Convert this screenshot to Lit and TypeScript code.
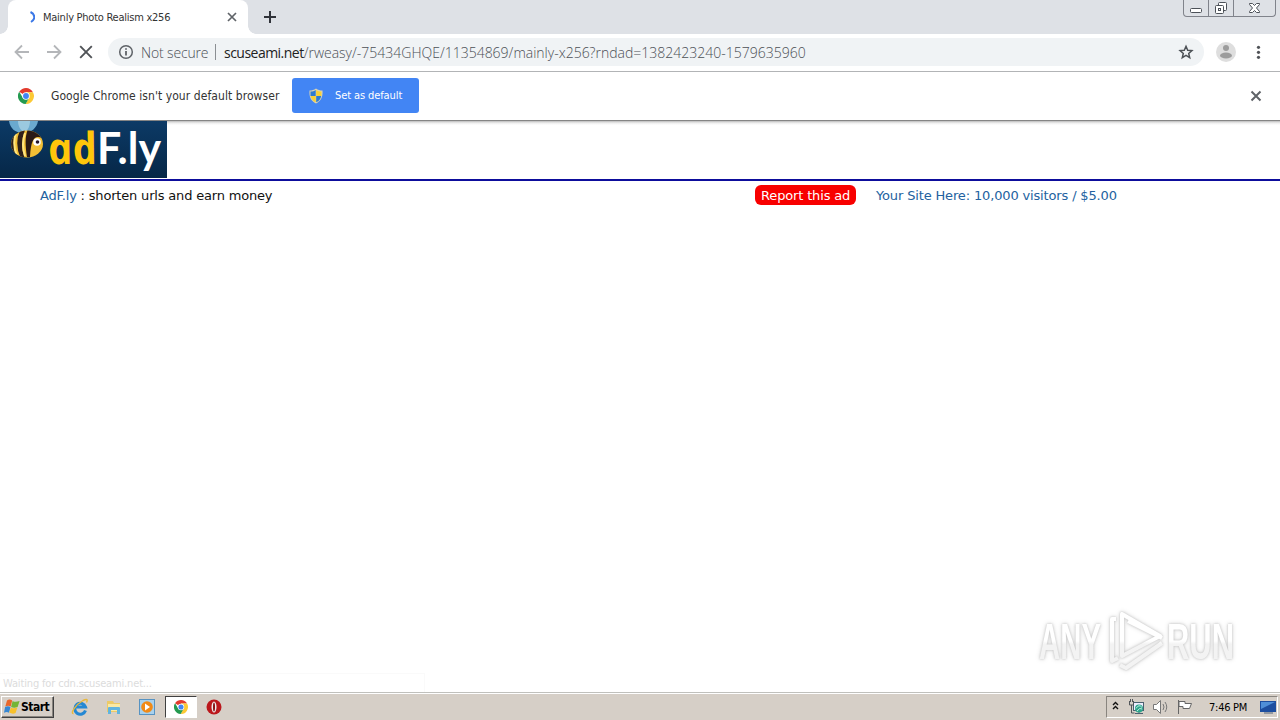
import { LitElement, css, html, svg } from "lit";
import { customElement, property } from "lit/decorators.js";

const chromeLogo = svg`
  <circle cx="12" cy="12" r="12" fill="#fff" />
  <path d="M12 12 1.800 5.600A12 12 0 0 1 22.400 6.200H12Z" fill="#e33b2e" />
  <path d="M12 12 12 6.200H22.400A12 12 0 0 1 11.500 24l5-9.300Z" fill="#fcc934" />
  <path d="M12 12 16.500 15 11.500 24A12 12 0 0 1 1.800 5.600l5.400 9.100Z" fill="#249a50" />
  <circle cx="12" cy="12" r="5.600" fill="#fff" />
  <circle cx="12" cy="12" r="4.400" fill="#4285f4" />
`;

// Tab strip, toolbar and the default-browser bar.
@customElement("browser-chrome")
export class BrowserChrome extends LitElement {
  @property() tabTitle = "";
  @property() host = "";
  @property() path = "";

  static styles = css`
    :host {
      display: block;
      flex: none;
      font-family: "DejaVu Sans Condensed", "DejaVu Sans", sans-serif;
      font-stretch: condensed;
      color: #333;
      background: #fff;
    }
    svg {
      display: block;
      flex: none;
    }
    .strip {
      display: flex;
      height: 34px;
      background: #dee1e6;
    }
    .lead {
      width: 8px;
      height: 8px;
      align-self: flex-end;
      background: radial-gradient(circle at 0 0, transparent 7.5px, #fff 8px);
    }
    .tab {
      box-sizing: border-box;
      display: flex;
      align-items: center;
      width: 240px;
      padding: 0 10px 0 19px;
      background: #fff;
      border-radius: 8px 8px 0 0;
      font-size: 11px;
    }
    .foot {
      width: 8px;
      height: 8px;
      align-self: flex-end;
      background: radial-gradient(circle at 100% 0, transparent 7.5px, #fff 8px);
    }
    .title {
      flex: 1;
      margin-left: 8px;
      letter-spacing: -0.25px;
      white-space: nowrap;
    }
    .plus {
      margin: 11px 0 0 8px;
    }
    .controls {
      box-sizing: border-box;
      display: flex;
      width: 93px;
      height: 17px;
      margin: 0 4px 0 auto;
      border: 1px solid #80838b;
      border-top: 0;
      border-radius: 0 0 4px 4px;
    }
    .toolbar {
      box-sizing: border-box;
      display: flex;
      align-items: center;
      height: 38px;
      padding: 0 14px 1px;
      border-bottom: 1px solid #b2b4b6;
    }
    .toolbar > svg + svg {
      margin-left: 16px;
    }
    .toolbar > svg:last-child {
      margin-left: 14px;
    }
    .omnibox {
      box-sizing: border-box;
      display: flex;
      align-items: center;
      flex: 1;
      height: 28px;
      margin: 0 12px 0 14px;
      padding: 0 10px;
      border-radius: 14px;
      background: #f0f3f5;
      font: 300 14px "Open Sans", "Noto Sans", sans-serif;
      color: #4c5055;
      white-space: nowrap;
    }
    .secure {
      width: 67px;
      margin-left: 7px;
      letter-spacing: -0.15px;
    }
    .bar {
      width: 1px;
      height: 16px;
      margin: 0 8px 0 7px;
      background: #8b8f93;
    }
    .url {
      flex: 1;
    }
    .url b {
      font-weight: 400;
      letter-spacing: -0.52px;
      color: #222;
    }
    .infobar {
      box-sizing: border-box;
      display: flex;
      align-items: center;
      height: 49px;
      padding: 0 18px 1px;
      border-bottom: 1px solid #858585;
      font-size: 12px;
    }
    .message {
      width: 228px;
      margin: 0 13px 0 17px;
      white-space: nowrap;
      letter-spacing: 0.07px;
    }
    .default {
      box-sizing: border-box;
      display: flex;
      align-items: center;
      width: 127px;
      height: 35px;
      margin: 0 auto 0 0;
      padding: 0 0 0 16px;
      border: 0;
      border-radius: 3px;
      background: #4285f4;
      color: #fff;
      font: 11px "DejaVu Sans Condensed", "DejaVu Sans", sans-serif;
      letter-spacing: -0.1px;
      white-space: nowrap;
    }
    .default svg {
      margin-right: 11px;
    }
  `;

  render() {
    return html`
      <div class="strip">
        <div class="lead"></div>
        <div class="tab">
          <svg width="8" height="14" viewBox="0 0 8 14" fill="none" stroke="#3b78e7" stroke-width="2">
            <path d="M3.500 2C8.500 4.500 8.500 9.500 4 12" />
          </svg>
          <span class="title">${this.tabTitle}</span>
          <svg width="12" height="12" viewBox="0 0 12 12" stroke="#5f6368" stroke-width="1.700">
            <path d="m2 2 8 8M10 2l-8 8" />
          </svg>
        </div>
        <div class="foot"></div>
        <svg class="plus" width="12" height="12" viewBox="0 0 12 12" stroke="#30333a" stroke-width="2">
          <path d="M6 0v12M0 6h12" />
        </svg>
        <div class="controls">
          <svg width="91" height="16" viewBox="0 0 91 16" fill="none" stroke="#4c5158">
            <path d="M24.500 0v16M49.500 0v16" stroke="#80838b" />
            <rect x="6.500" y="8.500" width="11" height="4" rx="1" fill="#fff" />
            <rect x="34.500" y="2.500" width="8" height="8" rx="1" fill="#fff" />
            <rect x="31.500" y="5.500" width="8" height="8" rx="1" fill="#fff" />
            <rect x="34.500" y="8.500" width="2" height="2" />
            <path
              d="M65.500 3.500h3l2 2 2-2h3v1l-3 3.500 3 3.500v1h-3l-2-2-2 2h-3v-1l3-3.500-3-3.500Z"
              fill="#fff"
            />
          </svg>
        </div>
      </div>
      <div class="toolbar">
        <svg width="16" height="16" viewBox="0 0 16 16" fill="none" stroke="#b4b6b9" stroke-width="1.800">
          <path d="M15 8H2M8 1.500 1.500 8 8 14.500" />
        </svg>
        <svg width="16" height="16" viewBox="0 0 16 16" fill="none" stroke="#b4b6b9" stroke-width="1.800">
          <path d="M1 8h13M8 1.500 14.500 8 8 14.500" />
        </svg>
        <svg width="16" height="16" viewBox="0 0 16 16" fill="none" stroke="#505357" stroke-width="1.900">
          <path d="m2.200 2.200 11.600 11.600M13.800 2.200 2.200 13.800" />
        </svg>
        <div class="omnibox">
          <svg width="16" height="16" viewBox="0 0 16 16" fill="none" stroke="#5f6368" stroke-width="1.500">
            <circle cx="8" cy="8" r="6.300" />
            <path d="M8 7v4.500M8 4.300v1.500" stroke-width="1.800" />
          </svg>
          <span class="secure">Not secure</span>
          <span class="bar"></span>
          <span class="url"><b>${this.host}</b>${this.path}</span>
          <svg width="16" height="16" viewBox="0 0 16 16" fill="none" stroke="#4d5156" stroke-width="1.500">
            <path d="m8 2.300 1.700 3.900 4.200.4-3.200 2.800 1 4.200L8 11.400l-3.700 2.200 1-4.200-3.200-2.800 4.200-.4Z" />
          </svg>
        </div>
        <svg width="20" height="20" viewBox="0 0 20 20">
          <circle cx="10" cy="10" r="10" fill="#dedede" />
          <circle cx="10" cy="6" r="3" fill="#9c9c9c" />
          <ellipse cx="10" cy="13.500" rx="6" ry="3" fill="#9c9c9c" />
        </svg>
        <svg width="16" height="16" viewBox="0 0 16 16" fill="#505357">
          <circle cx="8.500" cy="3.300" r="1.600" />
          <circle cx="8.500" cy="8.300" r="1.600" />
          <circle cx="8.500" cy="13.300" r="1.600" />
        </svg>
      </div>
      <div class="infobar">
        <svg width="16" height="16" viewBox="0 0 24 24">${chromeLogo}</svg>
        <span class="message">Google Chrome isn't your default browser</span>
        <button class="default">
          <svg width="16" height="16" viewBox="0 0 16 16">
            <path d="M8 .5C6 2 4 2.500 1.500 2.500 1 9 3 13 8 15.500 13 13 15 9 14.500 2.500 12 2.500 10 2 8 .5Z" fill="#d9d3b4" />
            <path d="M7.700 2v6H2.500V3.500C5 3.500 6 3 7.700 2ZM8.200 8h5c-.6 3-2 5-5 6.300Z" fill="#2d7bd0" />
            <path d="M8.200 2v6h5.200V3.500C11 3.500 10 3 8.200 2ZM7.700 8h-5c.6 3 2 5 5 6.300Z" fill="#f8d135" />
          </svg>
          Set as default
        </button>
        <svg width="12" height="12" viewBox="0 0 12 12" stroke="#5f6368" stroke-width="2">
          <path d="m1.500 1.500 9 9M10.500 1.500l-9 9" />
        </svg>
      </div>
    `;
  }
}

@customElement("ad-page")
export class AdPage extends LitElement {
  static styles = css`
    :host {
      display: block;
      position: relative;
      flex: 1;
      min-height: 0;
      overflow: hidden;
      background: #fff;
      font-family: "DejaVu Sans", sans-serif;
      font-size: 13px;
    }
    svg {
      display: block;
    }
    .banner {
      height: 58px;
      border-bottom: 2px solid #0d0d9c;
      background: linear-gradient(#bbb, #eee 2px, #fff 4px);
    }
    .row {
      display: flex;
      align-items: center;
      height: 28px;
      padding: 0 40px;
      white-space: nowrap;
    }
    .link {
      color: #2362a0;
    }
    .slogan {
      width: 715px;
      letter-spacing: -0.18px;
      color: #111;
    }
    .report {
      box-sizing: border-box;
      width: 101px;
      height: 20px;
      margin-right: 20px;
      padding-left: 6px;
      border-radius: 6px;
      background: #f80000;
      color: #fff;
      line-height: 21px;
      letter-spacing: -0.15px;
    }
    .site {
      letter-spacing: -0.15px;
    }
    .status {
      position: absolute;
      left: 0;
      bottom: 0;
      box-sizing: border-box;
      width: 425px;
      height: 19px;
      padding-left: 3px;
      border: solid #fafafa;
      border-width: 1px 1px 0 0;
      color: #dcdcdc;
      font: 11px/19px "DejaVu Sans Condensed", "DejaVu Sans", sans-serif;
      letter-spacing: -0.15px;
    }
    .watermark {
      position: absolute;
      right: 26px;
      bottom: 14px;
      filter: drop-shadow(0 0 1px #c4c4c4) drop-shadow(0 0 2px #ddd);
    }
    .mark {
      font: 700 50px "Liberation Sans", sans-serif;
    }
    .logo-a {
      font: italic 700 44px "Open Sans", sans-serif;
    }
    .logo-f {
      font: 700 44px Lato, sans-serif;
    }
  `;

  render() {
    return html`
      <div class="banner">
        <svg width="167" height="57" viewBox="0 0 167 57">
          <defs>
            <linearGradient id="sky" x2="0" y2="1">
              <stop stop-color="#0c3a66" />
              <stop offset="1" stop-color="#062747" />
            </linearGradient>
            <clipPath id="body"><ellipse cx="27" cy="23" rx="16" ry="13.500" /></clipPath>
          </defs>
          <rect width="167" height="57" fill="url(#sky)" />
          <path d="M9 0c1 7 6 12 14 12 8 0 14-5 15-12Z" fill="#6aa9cf" />
          <path d="M18 0c0 6 3 10 7 11 3-2 5-6 5-11Z" fill="#9bc9e0" />
          <g clip-path="url(#body)">
            <rect x="10" y="9" width="34" height="29" fill="#f3bf35" />
            <path d="M10 9h6q-5 12 2 28h-8ZM20 9q-6 14 1 29h4q-6-14 0-29Z" fill="#30201a" />
            <path d="M28 8c8-1 13 4 14 9-7-3-11 0-12 19h-3c-2-13-2-21 1-28Z" fill="#2b1a16" />
            <path d="M16 12q-4 11 1 23M25 12q-4 11 0 23" fill="none" stroke="#ffe681" stroke-width="2" />
          </g>
          <circle cx="37" cy="21" r="3.800" fill="#fff" />
          <circle cx="37.500" cy="21" r="1.800" fill="#24142a" />
          <g transform="translate(50.500 43) skewX(12)">
            <text class="logo-a" fill="#ffc60b" textLength="49" lengthAdjust="spacingAndGlyphs">ad</text>
          </g>
          <text class="logo-f" x="97" y="43" fill="#fff" textLength="64" lengthAdjust="spacingAndGlyphs">F.ly</text>
        </svg>
      </div>
      <div class="row">
        <span class="slogan"><span class="link">AdF.ly</span> : shorten urls and earn money</span>
        <span class="report">Report this ad</span>
        <span class="link site">Your Site Here: 10,000 visitors / $5.00</span>
      </div>
      <svg class="watermark" width="220" height="76" viewBox="0 0 220 76">
        <defs>
          <linearGradient id="shade" gradientUnits="userSpaceOnUse" x1="0" y1="8" x2="0" y2="70">
            <stop offset=".5" stop-color="#fff" />
            <stop offset=".55" stop-color="#f3f3f3" />
          </linearGradient>
        </defs>
        <g class="mark" fill="url(#shade)">
          <text x="5" y="57" textLength="62" lengthAdjust="spacingAndGlyphs">ANY</text>
          <text x="133" y="57" textLength="67" lengthAdjust="spacingAndGlyphs">RUN</text>
        </g>
        <g fill="none" stroke="url(#shade)" stroke-width="4" stroke-linejoin="round">
          <path d="M88 12v42l38-20Z" />
          <path d="M82 17h-4v42l6-3M86 63l6 3 36-25M94 19l34 17" />
        </g>
      </svg>
      <div class="status">Waiting for cdn.scuseami.net...</div>
    `;
  }
}

@customElement("task-bar")
export class TaskBar extends LitElement {
  @property() time = "";

  static styles = css`
    :host {
      box-sizing: border-box;
      display: flex;
      align-items: center;
      flex: none;
      height: 28px;
      padding: 1px 2px 0 1px;
      border-top: 1px solid #c0c0bc;
      background: #d6cfc7;
      box-shadow: inset 0 1px #fff;
      font: 11px "DejaVu Sans Condensed", "DejaVu Sans", sans-serif;
    }
    svg {
      display: block;
      flex: none;
    }
    .start {
      box-sizing: border-box;
      display: flex;
      align-items: center;
      gap: 1px;
      width: 53px;
      height: 22px;
      margin: 0 10px 0 0;
      padding: 0 2px;
      border: 1px solid;
      border-color: #fff #404040 #404040 #fff;
      background: #d6cfc7;
      box-shadow: inset -1px -1px #89857f;
      font: 700 12px "DejaVu Sans Condensed", "DejaVu Sans", sans-serif;
      letter-spacing: -0.5px;
      color: #000;
    }
    .app {
      display: grid;
      place-items: center;
      box-sizing: border-box;
      width: 32px;
      height: 22px;
      margin-right: 1.500px;
      border: 1px solid transparent;
    }
    .active {
      background: #fff;
      border-color: #404040 #fff #fff #404040;
    }
    .tray {
      box-sizing: border-box;
      display: flex;
      align-items: center;
      gap: 7px;
      width: 172px;
      height: 22px;
      margin-left: auto;
      padding: 0 1px 0 5px;
      border: 1px solid;
      border-color: #89857f #fff #fff #89857f;
    }
    .chevrons {
      margin-right: 1px;
    }
    .time {
      margin: 0 4px 0 9px;
      width: 40px;
      letter-spacing: -0.25px;
      white-space: nowrap;
    }
  `;

  render() {
    return html`
      <button class="start">
        <svg width="16" height="16" viewBox="0 0 16 16">
          <path d="M3 1.500c2-1.500 3.500-1 5.200 0L6.700 7.500C5 6.500 3.500 6.500 1.300 7.500Z" fill="#e8672b" />
          <path d="M8.600 2c2 1.200 4 1 7 0l-2 6c-2.500 1-4.500 1-6.500 0Z" fill="#74b535" />
          <path d="M1.100 8c2-1 3.700-1 5.400 0L5 13.800c-1.500-1-3-1-5 0Z" fill="#3687d3" />
          <path d="M6.900 8.500c2 1.200 4 1 6.500 0l-1.800 5.500c-2 1-4.300.8-6.300-.5Z" fill="#f8c12c" />
        </svg>
        Start
      </button>
      <div class="app">
        <svg width="18" height="18" viewBox="0 0 18 18" fill="none">
          <path d="M14.500 12.500A5.500 5.500 0 1 1 14.500 9H5" stroke="#2488d3" stroke-width="3" />
          <path d="M2.500 15.500C-1 16 4 7 12 2.500c4-2 5-1 3.500 2" stroke="#e9b83a" stroke-width="1.400" />
        </svg>
      </div>
      <div class="app">
        <svg width="18" height="18" viewBox="0 0 18 18">
          <path d="M2 3h6l1 2h6v9H2Z" fill="#ecca67" />
          <path d="M3 6h12v7H3Z" fill="#fae9a4" />
          <path d="M3 16V10q0-1 1-1h10q1 0 1 1v6h-3v-4H6v4Z" fill="#61b4df" />
        </svg>
      </div>
      <div class="app">
        <svg width="16" height="16" viewBox="0 0 16 16">
          <rect x=".5" y=".5" width="15" height="15" fill="#a8d1ed" stroke="#5793c2" />
          <circle cx="8" cy="8" r="5.800" fill="#f18a16" />
          <path d="m6 4.500 5 3.500-5 3.500Z" fill="#fff" />
        </svg>
      </div>
      <div class="app active">
        <svg width="14" height="14" viewBox="0 0 24 24">${chromeLogo}</svg>
      </div>
      <div class="app">
        <svg width="16" height="16" viewBox="0 0 16 16">
          <circle cx="8" cy="8" r="7.500" fill="#bb171c" />
          <ellipse cx="8" cy="8" rx="2.500" ry="5.500" fill="#eee" />
          <ellipse cx="8" cy="8" rx="1" ry="4.500" fill="#8a1014" />
        </svg>
      </div>
      <div class="tray">
        <svg class="chevrons" width="8" height="12" viewBox="0 0 8 12" fill="none" stroke="#111" stroke-width="1.400">
          <path d="m1 4 2.500-2.500L6 4M1 8l2.500-2.500L6 8" />
        </svg>
        <svg width="17" height="16" viewBox="0 0 17 16">
          <rect x="5.500" y="3.500" width="10" height="8" fill="#eef" stroke="#4c6170" />
          <path d="M7 14.500h8M11 11v3" stroke="#4c6170" />
          <circle cx="11" cy="9.500" r="4" fill="#2da58b" />
          <path d="M8 9.500q3-5 6-1M9 12q3-4 5-2" fill="none" stroke="#c2f0e4" />
          <path d="M1.500 2v4h4V2M2.500 0v3M4.500 0v3M3.500 6v8h3" fill="none" stroke="#52565a" />
        </svg>
        <svg width="17" height="16" viewBox="0 0 17 16" fill="none" stroke="#777">
          <path d="M1.500 5.500h3l4-4v13l-4-4h-3Z" fill="#fff" />
          <path d="M11 5q2 3 0 6M13 3q3.500 5 0 10" />
        </svg>
        <svg width="17" height="16" viewBox="0 0 17 16" fill="#fff" stroke="#666">
          <path d="M2.500 1v14" />
          <path d="M3 2.500h6v2h6.500l-2 5H7v-2H3Z" />
        </svg>
        <span class="time">${this.time}</span>
        <svg width="16" height="14" viewBox="0 0 16 14">
          <rect y="1" width="16" height="11" fill="#1d4e9f" />
          <path d="M1 2h14L1 9Z" fill="#4f8fd8" />
          <path d="M4 13h9" stroke="#50637a" />
        </svg>
      </div>
    `;
  }
}

@customElement("app-root")
export class AppRoot extends LitElement {
  static styles = css`
    :host {
      display: flex;
      flex-direction: column;
      width: 1280px;
      height: 720px;
      overflow: hidden;
      background: #fff;
    }
  `;

  render() {
    return html`
      <browser-chrome
        tabTitle="Mainly Photo Realism x256"
        host="scuseami.net"
        path="/rweasy/-75434GHQE/11354869/mainly-x256?rndad=1382423240-1579635960"
      ></browser-chrome>
      <ad-page></ad-page>
      <task-bar time="7:46 PM"></task-bar>
    `;
  }
}
